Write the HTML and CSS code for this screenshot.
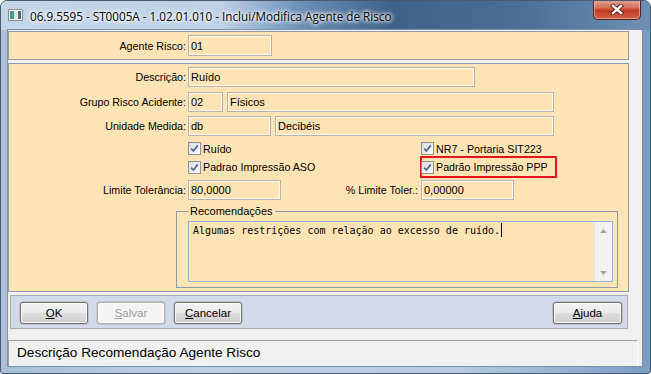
FILE: index.html
```html
<!DOCTYPE html>
<html>
<head>
    <meta charset="UTF-8">
    <title>Inclui/Modifica Agente de Risco</title>
    <link rel="stylesheet" href="styles.css">
</head>
<body>
<div class="window">
    <div class="titlebar">
        <svg class="app-icon" width="15" height="12" viewBox="0 0 15 12">
            <rect x="0.5" y="0.5" width="14" height="11" fill="#f2f2f2" stroke="#8a8f96"/>
            <rect x="2" y="2" width="4" height="8" fill="#3f9d8c"/>
            <rect x="6" y="2" width="3" height="8" fill="#d8e4e6"/>
            <rect x="10" y="2" width="3" height="8" fill="#5c6670"/>
        </svg>
        <span class="title-text">06.9.5595 - ST0005A - 1.02.01.010 - Inclui/Modifica Agente de Risco</span>
        <div class="close-btn">
            <svg width="14" height="11" viewBox="0 0 14 11">
                <path d="M3 2 L11 9 M11 2 L3 9" stroke="#4a1a14" stroke-width="4.2" stroke-linecap="square"/>
                <path d="M3 2 L11 9 M11 2 L3 9" stroke="#fff" stroke-width="2.4" stroke-linecap="square"/>
            </svg>
        </div>
    </div>

    <div class="client">
        <div class="panel panel-key">
            <div class="row">
                <label class="lbl" for="agente">Agente Risco:</label>
                <input class="field w-agente" type="text" id="agente" value="01">
            </div>
        </div>

        <div class="panel panel-main">
            <div class="row row-desc">
                <label class="lbl" for="descricao">Descrição:</label>
                <input class="field w-desc" type="text" id="descricao" value="Ruído">
            </div>
            <div class="row row-grupo">
                <label class="lbl" for="grupo">Grupo Risco Acidente:</label>
                <input class="field w-grupo" type="text" id="grupo" value="02">
                <input class="field w-grupo-desc" type="text" value="Físicos">
            </div>
            <div class="row row-unid">
                <label class="lbl" for="unidade">Unidade Medida:</label>
                <input class="field w-unid" type="text" id="unidade" value="db">
                <input class="field w-unid-desc" type="text" value="Decibéis">
            </div>

            <div class="checks checks-1">
                <div class="check-col">
                    <label class="check"><span class="box"><svg width="11" height="11" viewBox="0 0 11 11"><path d="M2.2 5.6 L4.4 8 L8.8 2.4" fill="none" stroke="#52658f" stroke-width="1.7"/></svg></span>Ruído</label>
                </div>
                <div class="check-col col-right">
                    <label class="check"><span class="box"><svg width="11" height="11" viewBox="0 0 11 11"><path d="M2.2 5.6 L4.4 8 L8.8 2.4" fill="none" stroke="#52658f" stroke-width="1.7"/></svg></span>NR7 - Portaria SIT223</label>
                </div>
            </div>
            <div class="checks checks-2">
                <div class="check-col">
                    <label class="check"><span class="box"><svg width="11" height="11" viewBox="0 0 11 11"><path d="M2.2 5.6 L4.4 8 L8.8 2.4" fill="none" stroke="#52658f" stroke-width="1.7"/></svg></span>Padrao Impressão ASO</label>
                </div>
                <div class="check-col">
                    <label class="check highlight"><span class="box"><svg width="11" height="11" viewBox="0 0 11 11"><path d="M2.2 5.6 L4.4 8 L8.8 2.4" fill="none" stroke="#52658f" stroke-width="1.7"/></svg></span>Padrão Impressão PPP</label>
                </div>
            </div>

            <div class="row row-limite">
                <label class="lbl" for="limite">Limite Tolerância:</label>
                <input class="field w-limite" type="text" id="limite" value="80,0000">
                <label class="lbl lbl-perc" for="perc">% Limite Toler.:</label>
                <input class="field w-limite" type="text" id="perc" value="0,00000">
            </div>

            <fieldset class="group">
                <legend>Recomendações</legend>
                <div class="memo">
                    <div class="memo-text">Algumas restrições com relação ao excesso de ruído.<span class="caret"></span></div>
                    <div class="vscroll">
                        <div class="arrow"><svg width="7" height="4" viewBox="0 0 7 4"><path d="M0 4 L3.5 0 L7 4 Z" fill="#a7a7a7"/></svg></div>
                        <div class="arrow"><svg width="7" height="4" viewBox="0 0 7 4"><path d="M0 0 L3.5 4 L7 0 Z" fill="#a7a7a7"/></svg></div>
                    </div>
                </div>
            </fieldset>
        </div>

        <div class="buttonbar">
            <button class="btn"><u>O</u>K</button>
            <button class="btn" disabled><u>S</u>alvar</button>
            <button class="btn"><u>C</u>ancelar</button>
            <button class="btn btn-help"><u>A</u>juda</button>
        </div>

        <div class="status">Descrição Recomendação Agente Risco</div>
    </div>
</div>
</body>
</html>
```

FILE: styles.css
```css
body {
    margin: 0;
    background-color: #fff;
    font-family: "Liberation Sans", Arial, sans-serif;
}
.window {
    width: 651px;
    height: 374px;
    box-sizing: border-box;
    border: 1px solid #4a5a6e;
    border-radius: 7px 7px 3px 3px;
    background: linear-gradient(to right, #a9c0da 0, #bcd0e6 30%, #b7cce3 70%, #7b9cc2 100%);
    display: flex;
    flex-direction: column;
    overflow: hidden;
}
.titlebar {
    height: 29px;
    flex: none;
    display: flex;
    align-items: flex-start;
    background: linear-gradient(to right, #c3d5ea 0, #bdd1e7 34%, #6f91b8 46%, #3f628b 60%, #4a6e97 80%, #6f90b6 100%);
}
.app-icon {
    margin: 8px 0 0 7px;
}
.title-text {
    margin: 7px 0 0 7px;
    font-family: "Open Sans", "Noto Sans", sans-serif;
    font-size: 11.7px;
    line-height: 16px;
    color: #000;
    text-shadow: 0 0 5px #fff, 0 0 5px #fff, 0 0 3px #fff;
}
.close-btn {
    margin: -1px 9px 0 auto;
    width: 48px;
    height: 20px;
    box-sizing: border-box;
    border: 1px solid #5a1e16;
    border-top: none;
    border-radius: 0 0 5px 5px;
    background: linear-gradient(to bottom, #e3a597 0, #d46f5c 40%, #c23a22 55%, #d1614a 100%);
    box-shadow: inset 0 0 0 1px rgba(255, 220, 210, 0.5);
    display: flex;
    align-items: center;
    justify-content: center;
}

.client {
    margin: 0 8px 0 7px;
    width: 634px;
    height: 336px;
    background-color: #f0f0f0;
    box-shadow: 0 0 0 1px #7d90a8;
}
.panel {
    width: 621px;
    box-sizing: border-box;
    border: 1px solid #8c9bb0;
    background-color: #fee4b4;
}
.panel-key {
    margin-top: 1px;
    height: 29px;
    padding-top: 3px;
}
.panel-main {
    margin-top: 3px;
    height: 229px;
    padding-top: 3px;
}

.row {
    display: flex;
    align-items: center;
}
.lbl {
    width: 177px;
    margin-right: 2px;
    text-align: right;
    font-size: 10.7px;
    color: #000;
}
.field {
    height: 20px;
    box-sizing: border-box;
    padding: 0 2px;
    margin: 0 4px 0 0;
    border: 1px solid #b7b2aa;
    box-shadow: inset 0 0 0 1px #fff8ec;
    background: transparent;
    font-family: "Liberation Sans", Arial, sans-serif;
    font-size: 11px;
    color: #000;
}
.w-agente { width: 84px; height: 21px; }
.w-desc { width: 287px; }
.w-grupo { width: 35px; }
.w-grupo-desc { width: 327px; }
.w-unid { width: 83px; }
.w-unid-desc { width: 279px; }
.w-limite { width: 93px; }
.row-grupo { margin-top: 5px; }
.row-unid { margin-top: 4px; }
.row-limite { margin-top: 2px; }
.lbl-perc {
    width: 137px;
    margin-left: -4px;
    margin-right: 3px;
}

.checks {
    display: flex;
    padding-left: 179px;
}
.checks-1 {
    margin-top: 5px;
    height: 15px;
}
.checks-2 {
    height: 22px;
}
.check-col {
    flex: none;
    width: 232px;
    display: flex;
    align-items: center;
}
.col-right {
    padding-left: 1px;
}
.check {
    display: flex;
    align-items: center;
    font-size: 10.7px;
    color: #000;
}
.box {
    width: 13px;
    height: 13px;
    box-sizing: border-box;
    margin-right: 2px;
    border: 1px solid #8e8f8f;
    background: linear-gradient(135deg, #d6d9de 0, #eef0f3 60%, #fbfbfb 100%);
    display: flex;
    align-items: center;
    justify-content: center;
}
.highlight {
    width: 137px;
    height: 22px;
    box-sizing: border-box;
    border: 2px solid #e3141c;
}
.highlight .box {
    margin-left: -1px;
}

.group {
    margin: 4px 0 0 167px;
    width: 442px;
    box-sizing: border-box;
    min-inline-size: 0;
    padding: 3px 4px 5px 11px;
    border: 1px solid #8c9aab;
}
.group legend {
    padding: 0 2px;
    font-size: 11px;
    line-height: 14px;
    color: #000;
}
.memo {
    width: 425px;
    height: 61px;
    box-sizing: border-box;
    border: 1px solid #92b2d6;
    display: flex;
}
.memo-text {
    flex: 1;
    padding: 1px 4px;
    font-family: "DejaVu Sans Mono", "Liberation Mono", monospace;
    font-size: 10px;
    line-height: 14px;
    color: #000;
}
.caret {
    display: inline-block;
    width: 1px;
    height: 14px;
    margin-left: 1px;
    vertical-align: -3px;
    background-color: #000;
}
.vscroll {
    width: 17px;
    background-color: #f2f2f2;
    border-left: 1px solid #e6e6e6;
    display: flex;
    flex-direction: column;
    justify-content: space-between;
}
.arrow {
    height: 17px;
    display: flex;
    align-items: center;
    justify-content: center;
}

.buttonbar {
    margin: 3px 0 0 2px;
    width: 618px;
    height: 34px;
    box-sizing: border-box;
    border: 1px solid #a3aec2;
    box-shadow: 0 0 0 1px #f7ead2;
    background-color: #d3dbea;
    padding: 6px 0 0 9px;
    display: flex;
    align-items: flex-start;
}
.btn {
    width: 68px;
    height: 22px;
    margin-right: 9px;
    padding: 0;
    border: 1px solid #707070;
    border-radius: 3px;
    background: linear-gradient(to bottom, #f2f2f2 0, #ebebeb 48%, #dddddd 52%, #cfcfcf 100%);
    box-shadow: inset 0 0 0 1px #fbfbfb, 0 0 0 1px #bfc3ca;
    font-family: "Liberation Sans", Arial, sans-serif;
    font-size: 11.5px;
    color: #000;
}
.btn:disabled {
    border-color: #adb2b5;
    background: #f4f4f4;
    color: #9a9a9a;
}
.btn-help {
    width: 69px;
    margin-left: auto;
    margin-right: 5px;
}

.status {
    margin-top: 11px;
    width: 630px;
    height: 26px;
    box-sizing: border-box;
    border-top: 1px solid #a0a0a0;
    border-left: 1px solid #a0a0a0;
    border-right: 1px solid #fff;
    padding-left: 8px;
    font-size: 13.6px;
    line-height: 24px;
    color: #000;
}
```
